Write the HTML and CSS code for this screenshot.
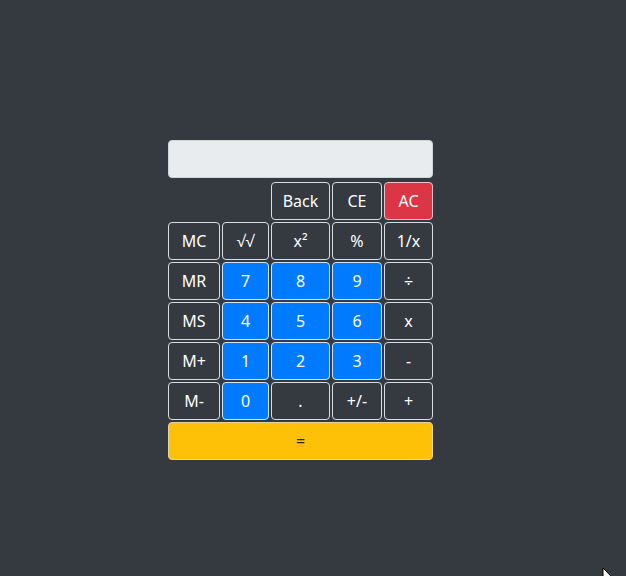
FILE: index.html
```html
<!DOCTYPE html>
<html lang="en">
<head>
<meta charset="utf-8">
<title>Calculator</title>
<link rel="stylesheet" href="styles.css">
</head>
<body>
<main class="page">
  <div class="calc">
    <div class="display"></div>
    <div class="keys">
      <button class="key dark c3">Back</button>
      <button class="key dark">CE</button>
      <button class="key red">AC</button>

      <button class="key dark">MC</button>
      <button class="key dark">√√</button>
      <button class="key dark">x²</button>
      <button class="key dark">%</button>
      <button class="key dark">1/x</button>

      <button class="key dark">MR</button>
      <button class="key blue">7</button>
      <button class="key blue">8</button>
      <button class="key blue">9</button>
      <button class="key dark">÷</button>

      <button class="key dark">MS</button>
      <button class="key blue">4</button>
      <button class="key blue">5</button>
      <button class="key blue">6</button>
      <button class="key dark">x</button>

      <button class="key dark">M+</button>
      <button class="key blue">1</button>
      <button class="key blue">2</button>
      <button class="key blue">3</button>
      <button class="key dark">-</button>

      <button class="key dark">M-</button>
      <button class="key blue">0</button>
      <button class="key dark">.</button>
      <button class="key dark">+/-</button>
      <button class="key dark">+</button>

      <button class="key yellow span">=</button>
    </div>
  </div>
</main>
<svg class="cursor" width="14" height="20" viewBox="0 0 14 20"><path d="M1 1 L1 16 L4.5 12.5 L7 18 L9 17 L6.8 11.8 L11.5 11.8 Z" fill="#fff" stroke="#000" stroke-width="1"/></svg>
</body>
</html>
```
FILE: styles.css
```css
html, body {
  margin: 0;
  padding: 0;
  background: #343a40;
  height: 100%;
  overflow: hidden;
}
body {
  font-family: "Segoe UI", "Noto Sans", "Open Sans", sans-serif;
  position: relative;
}
.page {
  padding: 140px 0 0 168px;
}
.calc {
  width: 265px;
  display: flex;
  flex-direction: column;
  gap: 4px;
}
.display {
  height: 36px;
  background: #e9ecef;
  border: 1px solid #ced4da;
  border-radius: 4px;
}
.keys {
  display: grid;
  grid-template-columns: 52px 47px 59px 50px 49px;
  grid-auto-rows: 38px;
  gap: 2px;
}
.key {
  font-family: inherit;
  font-size: 16px;
  line-height: 1;
  padding: 0;
  border: 1px solid #dadde0;
  border-radius: 4px;
  color: #fff;
  background: #343a40;
  cursor: pointer;
}
.c3 { grid-column: 3; }
.span { grid-column: 1 / span 5; }
.dark { background: #343a40; }
.blue { background: #007bff; border-color: #d5e4f5; }
.red { background: #dc3545; border-color: #e8c5c9; }
.yellow { background: #ffc107; color: #212529; border-color: #e6d59b; }
.cursor {
  position: absolute;
  left: 602px;
  top: 567px;
}
```
